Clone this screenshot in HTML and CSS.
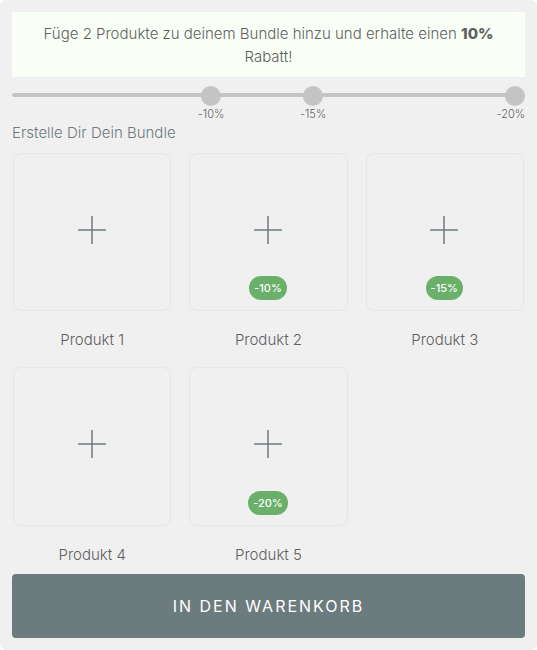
FILE: index.html
```html
<!DOCTYPE html>
<html lang="de">
<head>
  <meta charset="UTF-8">
  <meta name="viewport" content="width=device-width, initial-scale=1">
  <title>Bundle</title>
  <link rel="stylesheet" href="styles.css">
</head>
<body>
  <main class="bundle">
    <p class="hinweis">Füge 2 Produkte zu deinem Bundle hinzu und erhalte einen <strong>10%</strong> Rabatt!</p>

    <!-- Rabattstufen -->
    <div class="fortschritt">
      <div class="stufe stufe-1"><span class="punkt"></span>-10%</div>
      <div class="stufe stufe-2"><span class="punkt"></span>-15%</div>
      <div class="stufe stufe-3"><span class="punkt"></span>-20%</div>
    </div>

    <h2 class="titel">Erstelle Dir Dein Bundle</h2>

    <!-- Produkte -->
    <div class="produkte">
      <div class="produkt">
        <button class="karte" type="button" aria-labelledby="p1">
          <svg class="plus" viewBox="0 0 28 28"><path d="M14 0v28M0 14h28"/></svg>
        </button>
        <span class="name" id="p1">Produkt 1</span>
      </div>
      <div class="produkt">
        <button class="karte" type="button" aria-labelledby="p2">
          <svg class="plus" viewBox="0 0 28 28"><path d="M14 0v28M0 14h28"/></svg>
          <span class="rabatt">-10%</span>
        </button>
        <span class="name" id="p2">Produkt 2</span>
      </div>
      <div class="produkt">
        <button class="karte" type="button" aria-labelledby="p3">
          <svg class="plus" viewBox="0 0 28 28"><path d="M14 0v28M0 14h28"/></svg>
          <span class="rabatt">-15%</span>
        </button>
        <span class="name" id="p3">Produkt 3</span>
      </div>
      <div class="produkt">
        <button class="karte" type="button" aria-labelledby="p4">
          <svg class="plus" viewBox="0 0 28 28"><path d="M14 0v28M0 14h28"/></svg>
        </button>
        <span class="name" id="p4">Produkt 4</span>
      </div>
      <div class="produkt">
        <button class="karte" type="button" aria-labelledby="p5">
          <svg class="plus" viewBox="0 0 28 28"><path d="M14 0v28M0 14h28"/></svg>
          <span class="rabatt">-20%</span>
        </button>
        <span class="name" id="p5">Produkt 5</span>
      </div>
    </div>

    <button class="warenkorb" type="button">IN DEN WARENKORB</button>
  </main>
</body>
</html>
```
FILE: styles.css
```css
* { box-sizing: border-box; }
body {
  margin: 0;
  background-color: #fff;
  color: #5f5f5f;
  font-family: Inter, "Liberation Sans", sans-serif;
  font-size: 15px;
  font-weight: 300;
  line-height: 23px;
}
button {
  font: inherit;
  cursor: pointer;
}
.bundle {
  background-color: #f0f0f0;
  border-radius: 6px;
  padding: 12px;
}
.hinweis {
  margin: 0;
  padding: 10px 20px 9px;
  background-color: #f9fff6;
  text-align: center;
}
.hinweis strong { font-weight: 800; }

/* Rabattstufen */
.fortschritt {
  position: relative;
  height: 4px;
  margin-top: 16px;
  border-radius: 2px;
  background-color: #c4c4c4;
}
.stufe {
  position: absolute;
  top: -7px;
  display: flex;
  flex-direction: column;
  align-items: center;
  font-size: 11px;
  line-height: 16px;
  transform: translateX(-50%);
}
.stufe-1 { left: 38.8%; }
.stufe-2 { left: 58.7%; }
.stufe-3 {
  right: 0;
  align-items: flex-end;
  transform: none;
}
.punkt {
  width: 20px;
  height: 20px;
  border-radius: 50%;
  background-color: #c4c4c4;
}

.titel {
  margin: 24px 0 9px;
  color: #6c7b7e;
  font-size: 15px;
  font-weight: 300;
}

/* Produkte */
.produkte {
  display: grid;
  grid-template-columns: repeat(3, 1fr);
  gap: 16px 18px;
  padding: 0 1px;
}
.produkt {
  display: flex;
  flex-direction: column;
  gap: 17px;
  text-align: center;
}
.karte {
  position: relative;
  display: flex;
  align-items: center;
  justify-content: center;
  width: 100%;
  aspect-ratio: 1;
  padding: 0 1px 4px 0;
  border: 1px solid #e4e7e8;
  border-radius: 8px;
  background: none;
}
.plus {
  width: 28px;
  height: 28px;
  fill: none;
  stroke: #6c7b7e;
  stroke-width: 1.5;
}
.rabatt {
  position: absolute;
  bottom: 10px;
  padding: 0 5px;
  border-radius: 12px;
  background-color: #6aaf6a;
  color: #fff;
  font-size: 11px;
  font-weight: 500;
  line-height: 24px;
}

.warenkorb {
  display: block;
  width: 100%;
  margin-top: 8px;
  padding: 20px;
  border: none;
  border-radius: 4px;
  background-color: #6c7b7e;
  color: #fff;
  font-size: 16px;
  font-weight: 400;
  line-height: 24px;
  letter-spacing: 2px;
}
```
